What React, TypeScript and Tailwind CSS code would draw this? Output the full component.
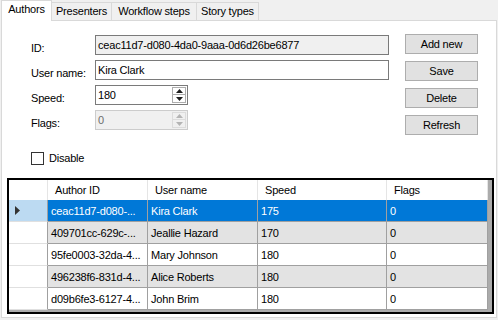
import React from 'react';

type Author = { id: string; name: string; speed: number; flags: number };

const authors: Author[] = [
  { id: 'ceac11d7-d080-...', name: 'Kira Clark', speed: 175, flags: 0 },
  { id: '409701cc-629c-...', name: 'Jeallie Hazard', speed: 170, flags: 0 },
  { id: '95fe0003-32da-4...', name: 'Mary Johnson', speed: 180, flags: 0 },
  { id: '496238f6-831d-4...', name: 'Alice Roberts', speed: 180, flags: 0 },
  { id: 'd09b6fe3-6127-4...', name: 'John Brim', speed: 180, flags: 0 },
];

const Label: React.FC<{ text: string }> = ({ text }) => (
  <div className="flex h-[20px] w-[64px] items-center pt-[6px]">{text}</div>
);

const Spin: React.FC<{ disabled?: boolean }> = ({ disabled }) => {
  const arrow = disabled ? '#b4b4b4' : '#1e1e1e';
  const edge = disabled ? 'border-[#dcdcdc]' : 'border-[#adadad]';
  return (
    <div className="mr-[1px] flex h-full w-[14px] flex-col">
      <div className={`flex h-1/2 items-center justify-center border ${edge}`}>
        <svg width="7" height="4" viewBox="0 0 7 4">
          <polygon points="3.5,0 7,4 0,4" fill={arrow} />
        </svg>
      </div>
      <div className={`flex h-1/2 items-center justify-center border border-t-0 ${edge}`}>
        <svg width="7" height="4" viewBox="0 0 7 4">
          <polygon points="0,0 7,0 3.5,4" fill={arrow} />
        </svg>
      </div>
    </div>
  );
};

const Button: React.FC<{ text: string }> = ({ text }) => (
  <button className="flex h-[20px] w-[73px] items-center justify-center border border-[#adadad] bg-[#e1e1e1] text-black">
    {text}
  </button>
);

const colW = ['w-[100px]', 'w-[110px]', 'w-[129px]', 'w-[101px]'];

export default function App() {
  return (
    <div className="h-[320px] w-[498px] overflow-hidden bg-[#f0f0f0] font-['Liberation_Sans',sans-serif] text-[11px] tracking-[-0.2px] text-black">
      {/* tab strip */}
      <div className="flex h-[20px] items-end pl-[1px]">
        <div className="relative z-10 mb-[-1px] flex h-[21px] w-[51px] items-center justify-center border border-b-0 border-[#d9d9d9] bg-white pb-[3px]">
          Authors
        </div>
        <div className="flex h-[18px] w-[60px] items-center justify-center border-t border-r border-[#d9d9d9]">Presenters</div>
        <div className="flex h-[18px] w-[85px] items-center justify-center border-t border-r border-[#d9d9d9]">Workflow steps</div>
        <div className="flex h-[18px] w-[62px] items-center justify-center border-t border-r border-[#d9d9d9]">Story types</div>
      </div>

      {/* tab page */}
      <div className="ml-[1px] h-[298px] w-[496px] border border-[#d9d9d9] bg-white">
        <div className="flex items-start pt-[14px]">
          <div className="ml-[29px] flex flex-col">
            <div className="flex flex-col gap-[5px]">
              <div className="flex">
                <Label text="ID:" />
                <div className="flex h-[20px] w-[294px] items-center border border-[#7a7a7a] bg-[#f0f0f0] pl-[2px]">
                  ceac11d7-d080-4da0-9aaa-0d6d26be6877
                </div>
              </div>
              <div className="flex">
                <Label text="User name:" />
                <div className="flex h-[20px] w-[294px] items-center border border-[#7a7a7a] bg-white pl-[2px]">
                  Kira Clark
                </div>
              </div>
              <div className="flex">
                <Label text="Speed:" />
                <div className="flex h-[20px] w-[93px] items-center justify-between border border-[#7a7a7a] bg-white py-[1px] pl-[2px]">
                  <span>180</span>
                  <Spin />
                </div>
              </div>
              <div className="flex">
                <Label text="Flags:" />
                <div className="flex h-[20px] w-[93px] items-center justify-between border border-[#cccccc] bg-[#f0f0f0] py-[1px] pl-[2px] text-[#6d6d6d]">
                  <span>0</span>
                  <Spin disabled />
                </div>
              </div>
            </div>
            <div className="mt-[22px] flex h-[13px] items-center gap-[5px] leading-[13px]">
              <div className="h-[13px] w-[13px] border border-[#333333] bg-white" />
              <span>Disable</span>
            </div>
          </div>
          <div className="ml-[16px] mt-[-1px] flex flex-col gap-[7px]">
            <Button text="Add new" />
            <Button text="Save" />
            <Button text="Delete" />
            <Button text="Refresh" />
          </div>
        </div>

        {/* data grid */}
        <div className="ml-[5px] mt-[13px] flex h-[136px] w-[487px] flex-col border-2 border-black bg-[#ababab]">
          <div className="flex h-[20px]">
            <div className="h-full w-[39px] border-r border-[#e5e5e5] bg-white" />
            {['Author ID', 'User name', 'Speed', 'Flags'].map((h, i) => (
              <div key={h} className={`flex h-full items-center border-r border-[#e5e5e5] bg-white pl-[7px] ${colW[i]}`}>
                {h}
              </div>
            ))}
          </div>
          {authors.map((a, idx) => {
            const sel = idx === 0;
            const rowBg = sel ? 'bg-[#0078d7] text-white' : idx % 2 === 1 ? 'bg-[#e3e3e3]' : 'bg-white';
            const cells = [a.id, a.name, String(a.speed), String(a.flags)];
            return (
              <div key={a.id} className="flex h-[22px]">
                <div
                  className={`flex h-full w-[39px] items-center border-r border-b border-r-[#a0a0a0] border-b-[#e0e0e0] pl-[6px] ${
                    sel ? 'bg-[#bcdaf2]' : 'bg-white'
                  }`}
                >
                  {sel && (
                    <svg width="5" height="9" viewBox="0 0 5 9">
                      <polygon points="0,0 5,4.5 0,9" fill="#333333" />
                    </svg>
                  )}
                </div>
                {cells.map((c, i) => (
                  <div
                    key={i}
                    className={`flex h-full items-center overflow-hidden whitespace-nowrap border-r border-b border-[#a0a0a0] pl-[3px] pt-[2px] ${colW[i]} ${rowBg}`}
                  >
                    {c}
                  </div>
                ))}
              </div>
            );
          })}
        </div>
      </div>
    </div>
  );
}
